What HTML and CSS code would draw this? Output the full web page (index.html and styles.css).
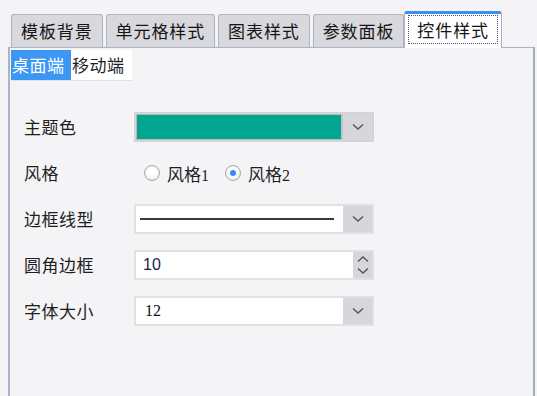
FILE: index.html
```html
<!DOCTYPE html>
<html lang="zh">
<head>
<meta charset="utf-8">
<link rel="stylesheet" href="styles.css">
</head>
<body>
<div class="tabs">
  <div class="tab">模板背景</div>
  <div class="tab">单元格样式</div>
  <div class="tab">图表样式</div>
  <div class="tab">参数面板</div>
  <div class="tab active"><span class="focus">控件样式</span></div>
</div>
<div class="panel">
  <div class="subtabs">
    <div class="subtab on">桌面端</div>
    <div class="subtab">移动端</div>
  </div>
  <div class="form">
    <div class="label">主题色</div>
    <div class="select color">
      <div class="field"><div class="swatch"></div></div>
      <div class="btn"><svg width="12" height="8" viewBox="0 0 12 8"><path d="M1 1.5 L6 6 L11 1.5" fill="none" stroke="#555" stroke-width="1.4"/></svg></div>
    </div>

    <div class="label">风格</div>
    <div class="radios">
      <span class="radio"></span><span class="rtext">风格<span class="num">1</span></span>
      <span class="radio checked"></span><span class="rtext">风格<span class="num">2</span></span>
    </div>

    <div class="label">边框线型</div>
    <div class="select">
      <div class="field"><div class="line"></div></div>
      <div class="btn"><svg width="12" height="8" viewBox="0 0 12 8"><path d="M1 1.5 L6 6 L11 1.5" fill="none" stroke="#555" stroke-width="1.4"/></svg></div>
    </div>

    <div class="label">圆角边框</div>
    <div class="select">
      <div class="field"><span class="val">10</span></div>
      <div class="spin">
        <svg width="12" height="8" viewBox="0 0 12 8"><path d="M1 6.5 L6 2 L11 6.5" fill="none" stroke="#555" stroke-width="1.4"/></svg>
        <svg width="12" height="8" viewBox="0 0 12 8"><path d="M1 1.5 L6 6 L11 1.5" fill="none" stroke="#555" stroke-width="1.4"/></svg>
      </div>
    </div>

    <div class="label">字体大小</div>
    <div class="select">
      <div class="field"><span class="val serif">12</span></div>
      <div class="btn"><svg width="12" height="8" viewBox="0 0 12 8"><path d="M1 1.5 L6 6 L11 1.5" fill="none" stroke="#555" stroke-width="1.4"/></svg></div>
    </div>
  </div>
</div>
</body>
</html>
```
FILE: styles.css
```css
html, body {
  margin: 0;
  padding: 0;
  background: #f4f4f7;
  width: 537px;
  height: 396px;
  overflow: hidden;
  font-family: "Noto Sans CJK SC", "Noto Sans", sans-serif;
  color: #1e1e1e;
}

.tabs {
  display: flex;
  align-items: flex-end;
  height: 36px;
  padding: 11px 0 0 11px;
  box-sizing: content-box;
}

.tab {
  height: 33px;
  box-sizing: border-box;
  border: 1px solid #aab4c5;
  border-bottom: none;
  border-radius: 3px 3px 0 0;
  background: #d8d8dd;
  padding: 0 9px;
  margin-right: 3px;
  font-size: 17px;
  letter-spacing: 0.9px;
  line-height: 31px;
  white-space: nowrap;
  color: #151515;
}

.tab.active {
  height: 37px;
  margin-right: 0;
  margin-left: -3px;
  margin-bottom: -1px;
  background: #ffffff;
  border-top: 3px solid #3d8fef;
  padding: 1px 3px 0 3px;
  position: relative;
}

.focus {
  display: block;
  border: 1px dotted #4a4a8a;
  padding: 0 8px;
  line-height: 27px;
}

.panel {
  margin-left: 8px;
  width: 527px;
  height: 350px;
  box-sizing: border-box;
  border-top: 1px solid #aab4c5;
  border-left: 2px solid #aab4c5;
  border-right: 2px solid #9eabc0;
  padding: 2px 0 0 1px;
}

.subtabs {
  display: flex;
  width: 121px;
  height: 31px;
  box-sizing: border-box;
  background: #ffffff;
  border-bottom: 1px solid #e2e2e6;
}

.subtab {
  width: 60px;
  font-size: 17px;
  line-height: 30px;
  letter-spacing: 0.5px;
  padding-left: 1px;
  box-sizing: border-box;
}

.subtab.on {
  background: #3c97f2;
  color: #ffffff;
}

.form {
  display: grid;
  grid-template-columns: 110px 240px;
  grid-auto-rows: 30px;
  row-gap: 16px;
  margin: 31px 0 0 13px;
}

.label {
  font-size: 17px;
  line-height: 30px;
  letter-spacing: 0.5px;
}

.select {
  display: flex;
  height: 30px;
  box-sizing: border-box;
  border: 2px solid #e1e1e4;
  background: #d7d7db;
}

.select .field {
  flex: 1;
  background: #ffffff;
  display: flex;
  align-items: center;
}

.select.color {
  border-color: #d4d4d8;
}

.select.color .field {
  border: 1px solid #b9b9bc;
  border-right: 2px solid #c4c4c7;
}

.swatch {
  width: 100%;
  height: 100%;
  background: #00a68f;
}

.btn {
  width: 29px;
  display: flex;
  align-items: center;
  justify-content: center;
  background: #d7d7db;
}

.spin {
  width: 19px;
  display: flex;
  flex-direction: column;
  align-items: center;
  justify-content: center;
  gap: 4px;
  background: #d7d7db;
}

.line {
  width: 194px;
  height: 2px;
  background: #3a3a3a;
  margin-left: 4px;
}

.val {
  font-family: "Liberation Sans", sans-serif;
  font-size: 16px;
  color: #1c1c4a;
  padding-left: 7px;
}

.val.serif {
  font-family: "Liberation Serif", serif;
  font-size: 16px;
  padding-left: 9px;
  color: #111;
}

.radios {
  display: flex;
  align-items: center;
  padding-left: 10px;
}

.radio {
  width: 16px;
  height: 16px;
  box-sizing: border-box;
  border: 1px solid #a7a7a7;
  border-radius: 50%;
  background: radial-gradient(circle at 50% 40%, #ffffff 30%, #e4e4e4 100%);
  margin-right: 7px;
  position: relative;
}

.radio.checked::after {
  content: "";
  position: absolute;
  left: 4px;
  top: 4px;
  width: 6px;
  height: 6px;
  border-radius: 50%;
  background: #3b8bf0;
}

.rtext {
  font-size: 17px;
  margin-right: 16px;
}

.num {
  font-family: "Liberation Serif", serif;
  font-size: 16px;
}
```
